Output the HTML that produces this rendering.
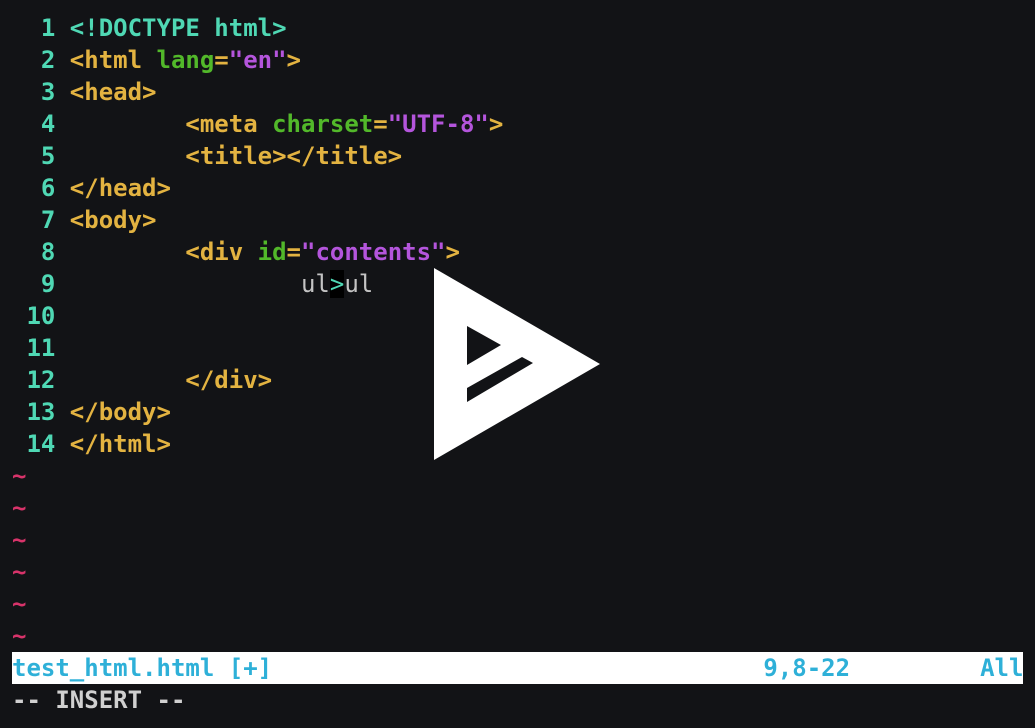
<!DOCTYPE html>
<html><head><style>
html,body{margin:0;padding:0;background:#121316;width:1035px;height:728px;overflow:hidden}
pre{position:absolute;left:12px;top:12px;margin:0;font-family:"DejaVu Sans Mono","Liberation Mono",monospace;font-size:24px;line-height:32px;font-weight:bold;color:#d0d0d0}
.n{color:#4fd8b4}.t{color:#e3b341}.a{color:#52b82a}.s{color:#b455dc}.d{color:#4fd8b4}.w{color:#c4c4c4;font-weight:normal}
.c{background:#000;color:#4fd8b4;font-weight:normal}.tl{color:#d8336a}
.st{display:inline-block;width:1011px;background:#fff;color:#2eb0d8}
</style></head><body>
<pre><span class="n">  1 </span><span class="d">&lt;!DOCTYPE html&gt;</span>
<span class="n">  2 </span><span class="t">&lt;html </span><span class="a">lang</span><span class="t">=</span><span class="s">"en"</span><span class="t">&gt;</span>
<span class="n">  3 </span><span class="t">&lt;head&gt;</span>
<span class="n">  4 </span>        <span class="t">&lt;meta </span><span class="a">charset</span><span class="t">=</span><span class="s">"UTF-8"</span><span class="t">&gt;</span>
<span class="n">  5 </span>        <span class="t">&lt;title&gt;&lt;/title&gt;</span>
<span class="n">  6 </span><span class="t">&lt;/head&gt;</span>
<span class="n">  7 </span><span class="t">&lt;body&gt;</span>
<span class="n">  8 </span>        <span class="t">&lt;div </span><span class="a">id</span><span class="t">=</span><span class="s">"contents"</span><span class="t">&gt;</span>
<span class="n">  9 </span>                <span class="w">ul</span><span class="c">&gt;</span><span class="w">ul</span>
<span class="n"> 10 </span>
<span class="n"> 11 </span>
<span class="n"> 12 </span>        <span class="t">&lt;/div&gt;</span>
<span class="n"> 13 </span><span class="t">&lt;/body&gt;</span>
<span class="n"> 14 </span><span class="t">&lt;/html&gt;</span>
<span class="tl">~</span>
<span class="tl">~</span>
<span class="tl">~</span>
<span class="tl">~</span>
<span class="tl">~</span>
<span class="tl">~</span>
<span class="st">test_html.html [+]                                  9,8-22         All</span>
-- INSERT --</pre>
<svg style="position:absolute;left:0;top:0" width="1035" height="728">
<path fill="#fff" fill-rule="evenodd" d="M434 268 L600 364 L434 460 Z M467 326 L501 345 L467 365 Z M467 388 L522 357 L533 363 L467 402 Z"/>
</svg>
</body></html>
